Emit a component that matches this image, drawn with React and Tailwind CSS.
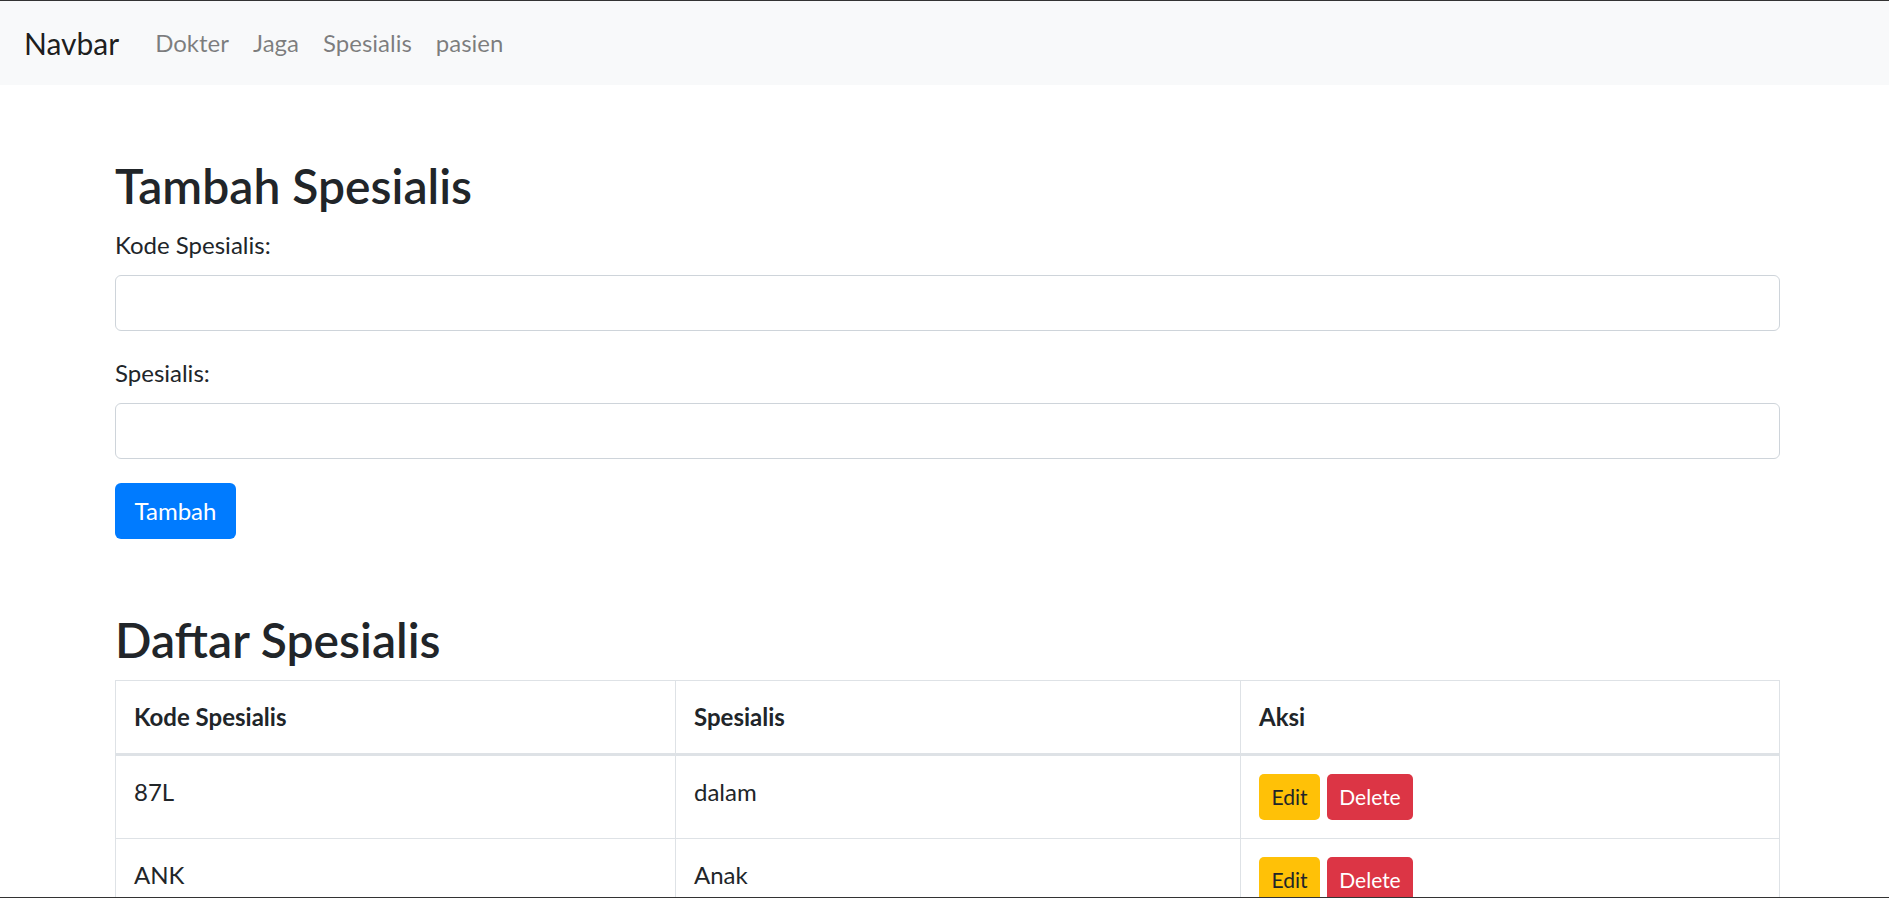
import { useState } from 'react'

const spesialisList = [
  { kode: '87L', nama: 'dalam' },
  { kode: 'ANK', nama: 'Anak' },
]

export default function App() {
  const [kode, setKode] = useState('')
  const [nama, setNama] = useState('')

  return (
    <div
      className="h-[898px] overflow-hidden border-y border-[#333] bg-white text-[#212529]"
      style={{ fontFamily: 'Lato, "Noto Sans", sans-serif' }}
    >
      <nav className="flex h-[84px] items-center bg-[#f8f9fa] px-6">
        <a href="#" className="mr-6 text-[30px] leading-[45px] text-black/90">
          Navbar
        </a>
        <div className="flex">
          {['Dokter', 'Jaga', 'Spesialis', 'pasien'].map((link) => (
            <a key={link} href="#" className="px-3 text-[24px] leading-[36px] text-black/50">
              {link}
            </a>
          ))}
        </div>
      </nav>

      <div className="ml-[115px] w-[1665px]">
        <section className="mt-[72px]">
          <h2 className="mb-3 text-[48px] font-semibold leading-[57.6px]">Tambah Spesialis</h2>
          <div className="mb-6">
            <label className="mb-3 block text-[24px] leading-[36px]">Kode Spesialis:</label>
            <input
              type="text"
              value={kode}
              onChange={(e) => setKode(e.target.value)}
              className="block h-[56px] w-full rounded-[6px] border border-[#ced4da] px-[18px] text-[24px] outline-none"
            />
          </div>
          <div className="mb-6">
            <label className="mb-3 block text-[24px] leading-[36px]">Spesialis:</label>
            <input
              type="text"
              value={nama}
              onChange={(e) => setNama(e.target.value)}
              className="block h-[56px] w-full rounded-[6px] border border-[#ced4da] px-[18px] text-[24px] outline-none"
            />
          </div>
          <button className="h-[56px] w-[121px] rounded-[6px] bg-[#007bff] text-[24px] leading-[36px] text-white">
            Tambah
          </button>
        </section>

        <section className="mt-[72px]">
          <h2 className="mb-3 text-[48px] font-semibold leading-[57.6px]">Daftar Spesialis</h2>
          <table className="w-full table-fixed border-collapse border border-[#dee2e6] text-[24px] leading-[36px]">
            <thead>
              <tr className="border-b-[3px] border-[#dee2e6]">
                <th className="w-[560px] border border-b-[3px] border-[#dee2e6] p-[18px] text-left font-bold">Kode Spesialis</th>
                <th className="w-[565px] border border-b-[3px] border-[#dee2e6] p-[18px] text-left font-bold">Spesialis</th>
                <th className="border border-b-[3px] border-[#dee2e6] p-[18px] text-left font-bold">Aksi</th>
              </tr>
            </thead>
            <tbody>
              {spesialisList.map((row) => (
                <tr key={row.kode}>
                  <td className="border border-[#dee2e6] p-[18px] align-top">{row.kode}</td>
                  <td className="border border-[#dee2e6] p-[18px] align-top">{row.nama}</td>
                  <td className="border border-[#dee2e6] p-[18px] align-top">
                    <div className="flex gap-[7px]">
                      <button className="h-[46px] w-[61px] rounded-[5px] bg-[#ffc107] text-[21px] text-[#212529]">Edit</button>
                      <button className="h-[46px] w-[86px] rounded-[5px] bg-[#dc3545] text-[21px] text-white">Delete</button>
                    </div>
                  </td>
                </tr>
              ))}
            </tbody>
          </table>
        </section>
      </div>
    </div>
  )
}
